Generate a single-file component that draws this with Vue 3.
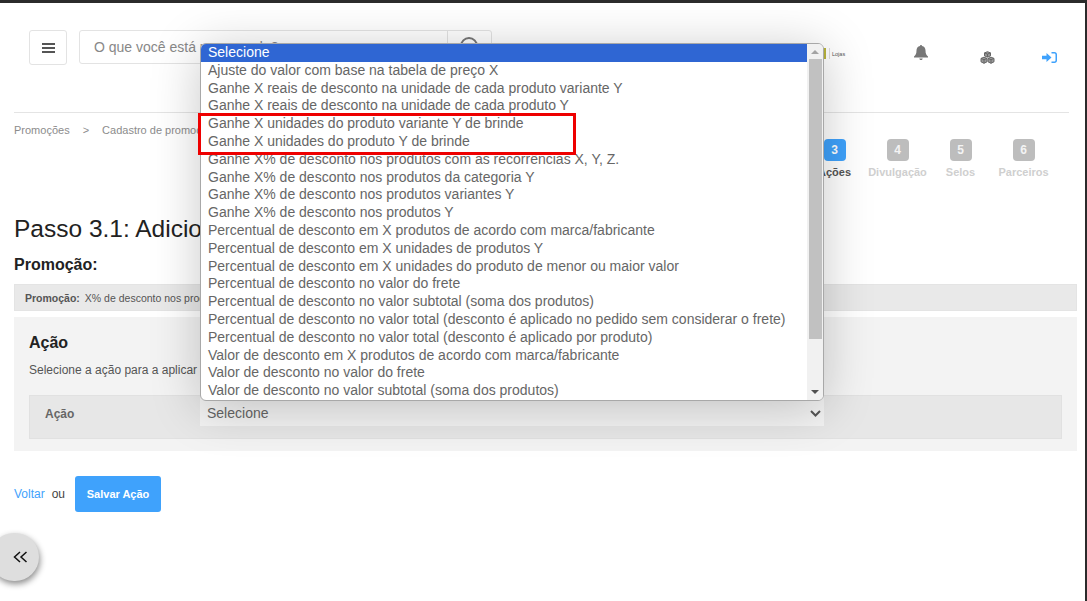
<script setup>
const options = [
  'Selecione',
  'Ajuste do valor com base na tabela de preço X',
  'Ganhe X reais de desconto na unidade de cada produto variante Y',
  'Ganhe X reais de desconto na unidade de cada produto Y',
  'Ganhe X unidades do produto variante Y de brinde',
  'Ganhe X unidades do produto Y de brinde',
  'Ganhe X% de desconto nos produtos com as recorrências X, Y, Z.',
  'Ganhe X% de desconto nos produtos da categoria Y',
  'Ganhe X% de desconto nos produtos variantes Y',
  'Ganhe X% de desconto nos produtos Y',
  'Percentual de desconto em X produtos de acordo com marca/fabricante',
  'Percentual de desconto em X unidades de produtos Y',
  'Percentual de desconto em X unidades do produto de menor ou maior valor',
  'Percentual de desconto no valor do frete',
  'Percentual de desconto no valor subtotal (soma dos produtos)',
  'Percentual de desconto no valor total (desconto é aplicado no pedido sem considerar o frete)',
  'Percentual de desconto no valor total (desconto é aplicado por produto)',
  'Valor de desconto em X produtos de acordo com marca/fabricante',
  'Valor de desconto no valor do frete',
  'Valor de desconto no valor subtotal (soma dos produtos)',
]
const steps = [
  { n: 3, label: 'Ações', on: true },
  { n: 4, label: 'Divulgação' },
  { n: 5, label: 'Selos' },
  { n: 6, label: 'Parceiros' },
]
</script>

<template>
  <div class="page">
    <header class="top">
      <button class="burger"><i></i><i></i><i></i></button>
      <div class="search">
        <span class="ph">O que você está procurando?</span>
        <span class="lens">
          <svg width="24" height="24" viewBox="0 0 24 24" fill="none" stroke="#777" stroke-width="2"><circle cx="11" cy="11" r="8"/><path d="M17 17l5 5"/></svg>
        </span>
      </div>
      <div class="logo"><b></b><em>Lojas</em></div>
      <div class="icons">
        <svg class="bell" width="14" height="15" viewBox="0 0 14 15" fill="#777"><path d="M7 0c.7 0 1 .5 1 1 2.300.5 3.500 2.300 3.500 4.500 0 3.500 1 4.500 2.500 6v1H0v-1c1.500-1.500 2.500-2.500 2.500-6C2.500 3.300 3.700 1.500 6 1c0-.5.300-1 1-1zM5.300 13.500h3.400C8.700 14.400 8 15 7 15s-1.700-.6-1.700-1.500z"/></svg>
        <svg class="cubes" width="15" height="13" viewBox="0 0 15 13" fill="#999" stroke="#666" stroke-width="1" stroke-linejoin="round"><path d="M7.500 .7l3 1.200v3L7.500 6.100l-3-1.200v-3z"/><path d="M4.500 1.900l3 1.200 3-1.200M7.500 3.100v3" fill="none"/><path d="M4 6.200l3 1.200v3.400l-3 1.500-3-1.500V7.400z"/><path d="M1 7.400l3 1.300 3-1.300M4 8.700v3.600" fill="none"/><path d="M11 6.200l3 1.200v3.400l-3 1.500-3-1.500V7.400z"/><path d="M8 7.400l3 1.300 3-1.300M11 8.700v3.600" fill="none"/></svg>
        <svg class="enter" width="15" height="11" viewBox="0 0 15 11" fill="#3fa2fc"><path d="M0 3.700h4.500V1L9.500 5.500 4.500 10V7.300H0z"/><path d="M9.500 0h3C14 0 15 1 15 2.500v6c0 1.500-1 2.500-2.500 2.500h-3V9.500h2.700c.8 0 1.300-.5 1.300-1.300V2.800c0-.8-.5-1.300-1.300-1.300H9.500z"/></svg>
      </div>
    </header>

    <nav class="crumbs">
      <div class="path">
        <span>Promoções</span><span>&gt;</span><span>Cadastro de promoções</span>
      </div>
      <ol class="steps">
        <li v-for="s in steps" :key="s.n" :class="{ on: s.on }">
          <span class="num">{{ s.n }}</span>
          <span class="lbl">{{ s.label }}</span>
        </li>
      </ol>
    </nav>

    <main class="main">
      <h1>Passo 3.1: Adicionar Ação</h1>
      <h2>Promoção:</h2>
      <p class="promo"><b>Promoção:</b> X% de desconto nos produtos</p>
      <section class="card">
        <h3>Ação</h3>
        <p class="hint">Selecione a ação para a aplicar na promoção</p>
        <div class="field">
          <label>Ação</label>
          <div class="select">
            <span>Selecione</span>
            <svg width="11" height="7" viewBox="0 0 11 7" fill="none" stroke="#555" stroke-width="2"><path d="M1 1l4.500 4.500L10 1"/></svg>
          </div>
        </div>
      </section>
      <div class="actions">
        <a>Voltar</a><span>ou</span><button>Salvar Ação</button>
      </div>
    </main>

    <button class="collapse">
      <svg width="15" height="12" viewBox="0 0 15 12" fill="none" stroke="#111" stroke-width="1.500"><path d="M7 1L1.500 6 7 11M13.500 1L8 6l5.500 5"/></svg>
    </button>

    <div class="dropdown">
      <ul>
        <li v-for="(o, i) in options" :key="o" :class="{ sel: i === 0 }">{{ o }}</li>
      </ul>
      <div class="bar">
        <span class="up"></span>
        <span class="thumb"></span>
        <span class="down"></span>
      </div>
    </div>
    <div class="mark"></div>
  </div>
</template>

<style>
html, body { margin: 0; background: #fff; }
</style>

<style scoped>
.page {
  position: relative;
  box-sizing: border-box;
  width: 1087px;
  height: 601px;
  overflow: hidden;
  border-top: 3px solid #2b2b2b;
  border-right: 2px solid #2b2b2b;
  background: #fff;
  font-family: "Liberation Sans", Arial, sans-serif;
  color: #222;
}
.top {
  display: flex;
  align-items: flex-start;
  margin: 0 16px 0 14px;
  padding: 27px 0 0 15px;
  height: 82px;
  border-bottom: 1px solid #e4e4e4;
}
.burger {
  box-sizing: border-box;
  width: 38px;
  height: 35px;
  padding: 0;
  border: 1px solid #e3e3e3;
  border-radius: 3px;
  background: #fff;
  display: flex;
  flex-direction: column;
  justify-content: center;
  align-items: center;
  gap: 2px;
}
.burger i { display: block; width: 13px; height: 2px; background: #555; }
.search {
  box-sizing: border-box;
  display: flex;
  align-items: center;
  width: 413px;
  height: 34px;
  margin-left: 12px;
  border: 1px solid #e3e3e3;
  border-radius: 3px;
}
.ph { flex: 1; padding-left: 14px; font-size: 14px; color: #888; }
.lens {
  width: 43px;
  height: 100%;
  border-left: 1px solid #e3e3e3;
  display: flex;
  align-items: center;
  justify-content: center;
}
.logo {
  display: flex;
  align-items: center;
  margin: 18px 0 0 329px;
  font-size: 5.500px;
  color: #555;
}
.logo b { width: 5px; height: 11px; margin-right: 2px; background: #b9b43c; border-right: 1px solid #ddd; padding-right: 3px; background-clip: content-box; }
.logo em { font-style: normal; }
.icons {
  display: flex;
  align-items: flex-start;
  position: absolute;
  left: 914px;
  top: 0;
}
.bell { margin-top: 42px; }
.cubes { margin: 48px 0 0 52px; }
.enter { margin: 49px 0 0 47px; }
.crumbs {
  display: flex;
  justify-content: space-between;
  margin: 0 0 0 14px;
  height: 102px;
}
.path {
  display: flex;
  gap: 13px;
  padding-top: 11px;
  font-size: 11px;
  color: #8c8c8c;
  font-weight: 400;
}
.steps {
  display: flex;
  list-style: none;
  margin: 0;
  padding: 26px 30px 0 0;
}
.steps li {
  display: flex;
  flex-direction: column;
  align-items: center;
  width: 63px;
  gap: 5px;
  font-size: 11px;
  font-weight: 700;
}
.num {
  width: 22px;
  height: 22px;
  border-radius: 4px;
  background: #bdbdbd;
  color: #f4f4f4;
  font-size: 12px;
  font-weight: 700;
  display: flex;
  align-items: center;
  justify-content: center;
}
.lbl { color: #cfcfcf; white-space: nowrap; }
.on .num { background: #3fa2fc; color: #fff; }
.on .lbl { color: #555; }
.main { margin: 0 8px 0 14px; }
h1 {
  margin: 0;
  font-size: 24.500px;
  font-weight: 400;
  line-height: 28px;
  color: #222;
}
h2 {
  margin: 12px 0 0;
  font-size: 16px;
  line-height: 20px;
  font-weight: 700;
  color: #222;
}
.promo {
  box-sizing: border-box;
  height: 27px;
  margin: 9px 0 0;
  padding: 0 10px;
  display: flex;
  align-items: center;
  gap: 5px;
  background: #e9e9e9;
  border: 1px solid #e4e4e4;
  font-size: 10.500px;
  color: #555;
}
.promo b { color: #555; }
.card {
  box-sizing: border-box;
  height: 134px;
  margin-top: 6px;
  padding: 16px 15px 0;
  background: #f3f3f3;
}
h3 {
  margin: 0;
  font-size: 16px;
  line-height: 20px;
  font-weight: 700;
  color: #222;
}
.hint {
  margin: 10px 0 0;
  font-size: 12px;
  line-height: 14px;
  color: #555;
}
.field {
  box-sizing: border-box;
  display: flex;
  align-items: flex-start;
  height: 44px;
  margin-top: 18px;
  background: #e7e7e7;
  border: 1px solid #e1e1e1;
}
.field label {
  box-sizing: border-box;
  flex: none;
  width: 170px;
  padding: 11px 0 0 15px;
  font-size: 12px;
  font-weight: 700;
  color: #666;
}
.select {
  box-sizing: border-box;
  flex: none;
  display: flex;
  align-items: center;
  justify-content: space-between;
  width: 624px;
  height: 30px;
  padding: 4px 3px 0 7px;
  background: #f3f3f3;
  font-size: 14px;
  color: #666;
}
.actions {
  display: flex;
  align-items: center;
  margin-top: 25px;
  font-size: 12px;
  color: #444;
}
.actions a { color: #3fa2fc; }
.actions span { margin-left: 7px; }
.actions button {
  width: 86px;
  height: 36px;
  margin-left: 10px;
  border: 0;
  border-radius: 3px;
  background: #3fa2fc;
  color: #fff;
  font: 700 11px "Liberation Sans", Arial, sans-serif;
}
.collapse {
  position: absolute;
  left: -10px;
  top: 530px;
  width: 49px;
  height: 48px;
  padding: 0 0 0 11px;
  border: 0;
  border-radius: 24px;
  background: #dedede;
  box-shadow: 1px 3px 6px rgba(0, 0, 0, .45);
  display: flex;
  align-items: center;
  justify-content: center;
}
.dropdown {
  position: absolute;
  left: 200px;
  top: 40px;
  box-sizing: border-box;
  width: 624px;
  height: 358px;
  display: flex;
  background: #fff;
  border: 1px solid #a8a8a8;
  border-radius: 6px;
  overflow: hidden;
  box-shadow: 0 6px 50px rgba(0, 0, 0, .22);
}
ul {
  flex: 1;
  list-style: none;
  margin: 0;
  padding: 0;
  font-size: 14px;
  color: #666;
}
ul li {
  height: 17.800px;
  line-height: 16px;
  padding-left: 7px;
  white-space: nowrap;
}
ul li.sel { background: #2f66d3; color: #fff; }
.bar {
  width: 16px;
  display: flex;
  flex-direction: column;
  align-items: center;
  background: #f1f1f1;
}
.up, .down { width: 0; height: 0; border-left: 4px solid transparent; border-right: 4px solid transparent; }
.up { margin: 6px 0 5px; border-bottom: 4px solid #a3a3a3; }
.thumb { width: 13px; height: 280px; background: #c1c1c1; }
.down { margin-top: auto; margin-bottom: 6px; border-top: 4px solid #505050; }
.mark {
  position: absolute;
  left: 198px;
  top: 110px;
  box-sizing: border-box;
  width: 378px;
  height: 42px;
  border: 3px solid #e00;
}
</style>
